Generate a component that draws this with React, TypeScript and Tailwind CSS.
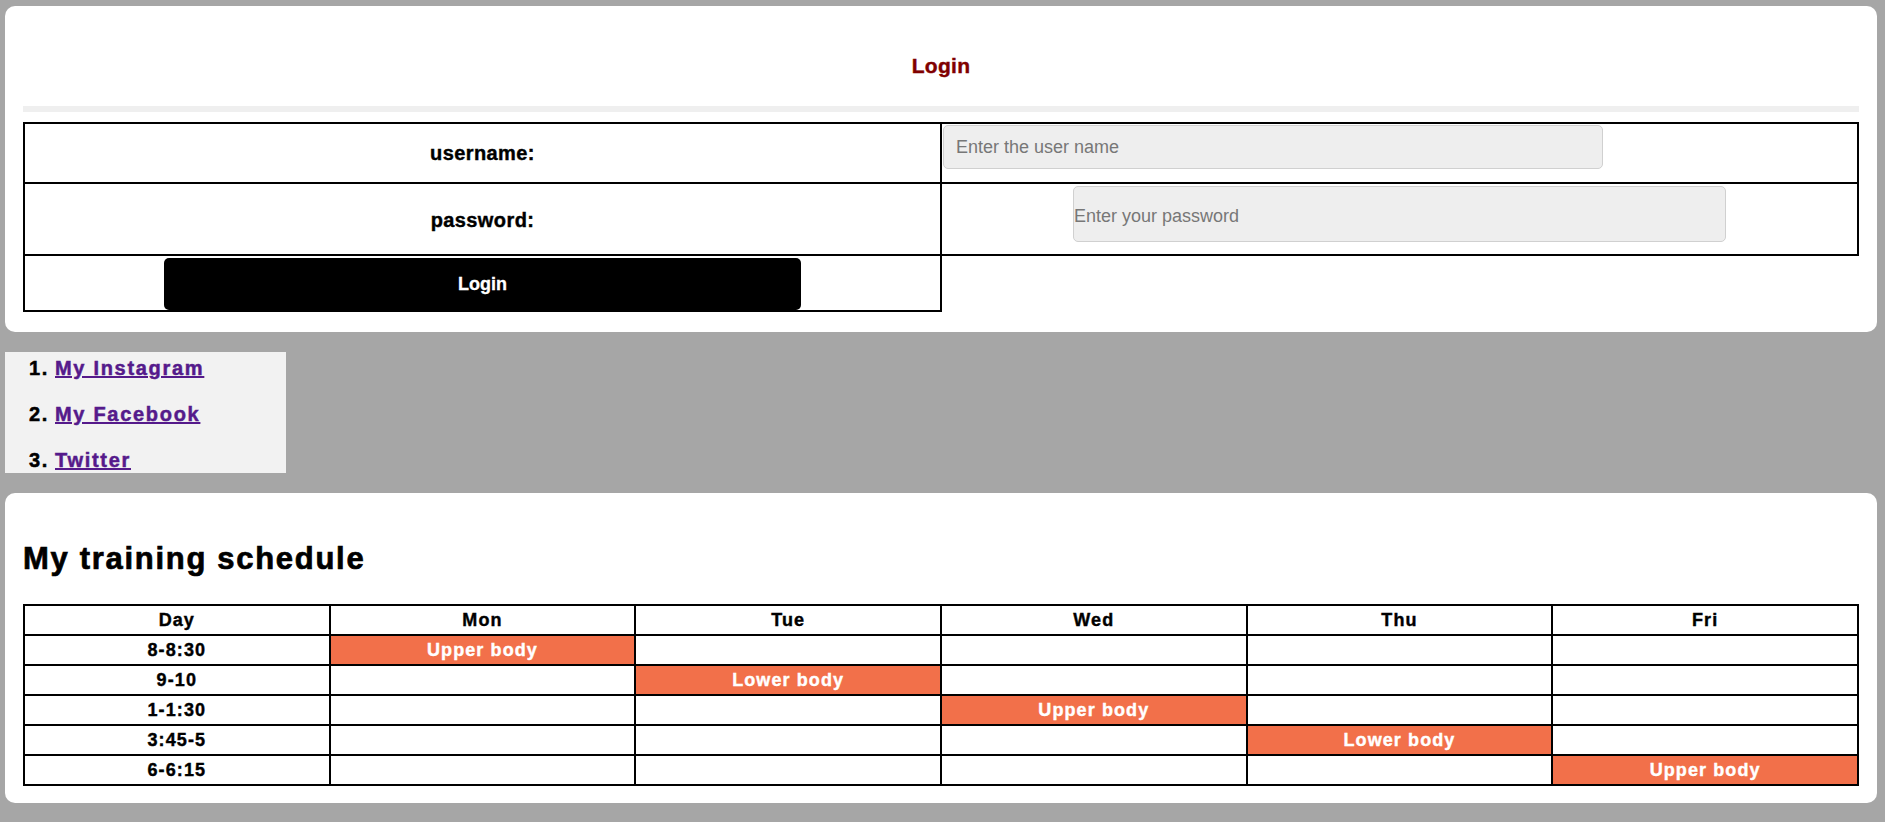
const days = ["Mon", "Tue", "Wed", "Thu", "Fri"];

const slots = [
  { time: "8-8:30", day: 0, label: "Upper body" },
  { time: "9-10", day: 1, label: "Lower body" },
  { time: "1-1:30", day: 2, label: "Upper body" },
  { time: "3:45-5", day: 3, label: "Lower body" },
  { time: "6-6:15", day: 4, label: "Upper body" },
];

const links = ["My Instagram", "My Facebook", "Twitter"];

const LoginCard = () => {
  return (
    <section className="rounded-[10px] bg-white px-[18px] pt-[47px] pb-[20px]">
      <h1 className="text-center text-[21px] leading-[26px] font-bold tracking-[0.3px] text-[#800000] [-webkit-text-stroke:0.4px]">Login</h1>
      <div className="mt-[27px] h-[6px] bg-[#efefef]" />
      <table className="mt-[10px] w-full table-fixed border-collapse">
        <tbody>
          <tr>
            <td className="border-2 border-black p-0 align-top">
              <div className="flex h-[58px] items-center justify-center text-[20px] font-bold tracking-[0.4px] [-webkit-text-stroke:0.4px]">username:</div>
            </td>
            <td className="border-2 border-black p-0 align-top">
              <div className="h-[58px] pl-px pt-px">
                <input
                  type="text"
                  placeholder="Enter the user name"
                  className="h-[44px] w-[660px] rounded-[5px] border border-[#d0d0d0] bg-[#eeeeee] px-[12px] text-[18px] outline-none placeholder:text-[#777]"
                />
              </div>
            </td>
          </tr>
          <tr>
            <td className="border-2 border-black p-0 align-top">
              <div className="flex h-[70px] items-center justify-center pt-[2px] text-[20px] font-bold tracking-[0.4px] [-webkit-text-stroke:0.4px]">password:</div>
            </td>
            <td className="border-2 border-black p-0 align-top">
              <div className="flex h-[70px] justify-center pt-[2px]">
                <input
                  type="password"
                  placeholder="Enter your password"
                  className="h-[56px] w-[653px] rounded-[5px] border border-[#d0d0d0] bg-[#eeeeee] px-0 pt-[4px] text-[18px] outline-none placeholder:text-[#777]"
                />
              </div>
            </td>
          </tr>
          <tr>
            <td className="border-2 border-black p-0 align-top">
              <div className="flex h-[54px] justify-center pt-[2px]">
                <button className="h-[52px] w-[637px] rounded-[5px] bg-black text-[18px] font-bold text-white [-webkit-text-stroke:0.3px]">Login</button>
              </div>
            </td>
          </tr>
        </tbody>
      </table>
    </section>
  );
};

const LinkList = () => {
  return (
    <div className="mt-[20px] h-[121px] w-[281px] overflow-hidden bg-[#f2f2f2]">
      <ol className="flex flex-col gap-[23px] pt-[5px] pl-[24px]">
        {links.map((name, i) => (
          <li key={name} className="flex h-[23px] text-[20px] leading-[23px] font-bold tracking-[1.7px] [-webkit-text-stroke:0.5px]">
            <span className="w-[26px] text-black">{i + 1}.</span>
            <a href="#" className="text-[#551a8b] underline">{name}</a>
          </li>
        ))}
      </ol>
    </div>
  );
};

const Schedule = () => {
  return (
    <section className="mt-[20px] rounded-[10px] bg-white px-[18px] pt-[48px] pb-[17px]">
      <h2 className="text-[31px] leading-[36px] font-bold tracking-[1.7px] text-black [-webkit-text-stroke:0.7px]">My training schedule</h2>
      <table className="mt-[27px] w-full table-fixed border-collapse text-[18px] font-bold tracking-[1.1px] [-webkit-text-stroke:0.4px]">
        <thead>
          <tr>
            <th className="border-2 border-black p-0">
              <div className="flex h-[28px] items-center justify-center">Day</div>
            </th>
            {days.map((d) => (
              <th key={d} className="border-2 border-black p-0">
                <div className="flex h-[28px] items-center justify-center">{d}</div>
              </th>
            ))}
          </tr>
        </thead>
        <tbody>
          {slots.map((s) => (
            <tr key={s.time}>
              <td className="border-2 border-black p-0">
                <div className="flex h-[28px] items-center justify-center">{s.time}</div>
              </td>
              {days.map((d, i) => (
                <td key={d} className={i === s.day ? "border-2 border-black bg-[#f2704a] p-0 text-white" : "border-2 border-black p-0"}>
                  <div className="flex h-[28px] items-center justify-center">{i === s.day ? s.label : ""}</div>
                </td>
              ))}
            </tr>
          ))}
        </tbody>
      </table>
    </section>
  );
};

export default function App() {
  return (
    <div className="min-h-screen bg-[#a6a6a6] pt-[6px] pr-[8px] pb-[19px] pl-[5px] font-['Liberation_Sans',Arial,sans-serif] text-black">
      <LoginCard />
      <LinkList />
      <Schedule />
    </div>
  );
}
